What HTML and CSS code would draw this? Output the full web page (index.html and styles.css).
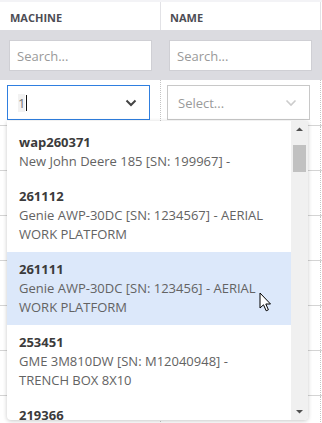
FILE: index.html
```html
<!DOCTYPE html>
<html>
<head>
<link rel="stylesheet" href="styles.css">
</head>
<body>
    <div id="page">
        <div class="topbar"></div>
        <div class="row head-row">
            <div class="cell col-machine">MACHINE</div>
            <div class="cell col-name">NAME</div>
        </div>
        <div class="row filter-row">
            <div class="cell col-machine"><input class="search" type="text" placeholder="Search..."></div>
            <div class="cell col-name"><input class="search" type="text" placeholder="Search..."></div>
        </div>
        <div class="row body-row select-row">
            <div class="cell col-machine">
                <div class="select focused">
                    <span class="typed">1</span><span class="caret"></span>
                    <svg class="chevron" width="12" height="8" viewBox="0 0 12 8"><path d="M1.5 1.5 L6 6 L10.5 1.5" fill="none" stroke="#444" stroke-width="2"/></svg>
                </div>
            </div>
            <div class="cell col-name">
                <div class="select">
                    <span class="placeholder">Select...</span>
                    <svg class="chevron" width="12" height="8" viewBox="0 0 12 8"><path d="M1.5 1.5 L6 6 L10.5 1.5" fill="none" stroke="#ccc" stroke-width="1.6"/></svg>
                </div>
            </div>
        </div>
        <div class="row body-row"><div class="cell col-machine"></div><div class="cell col-name"></div></div>
        <div class="row body-row"><div class="cell col-machine"></div><div class="cell col-name"></div></div>
        <div class="row body-row"><div class="cell col-machine"></div><div class="cell col-name"></div></div>
        <div class="row body-row"><div class="cell col-machine"></div><div class="cell col-name"></div></div>
        <div class="row body-row"><div class="cell col-machine"></div><div class="cell col-name"></div></div>
        <div class="row body-row"><div class="cell col-machine"></div><div class="cell col-name"></div></div>
        <div class="row body-row"><div class="cell col-machine"></div><div class="cell col-name"></div></div>

        <!-- open dropdown of the machine select -->
        <div id="dropdown">
            <div class="options">
                <div class="option">
                    <div class="opt-title">wap260371</div>
                    <div class="opt-desc">New John Deere 185 [SN: 199967] -</div>
                </div>
                <div class="option">
                    <div class="opt-title">261112</div>
                    <div class="opt-desc">Genie AWP-30DC [SN: 1234567] - AERIAL WORK PLATFORM</div>
                </div>
                <div class="option hover">
                    <div class="opt-title">261111</div>
                    <div class="opt-desc">Genie AWP-30DC [SN: 123456] - AERIAL WORK PLATFORM</div>
                </div>
                <div class="option">
                    <div class="opt-title">253451</div>
                    <div class="opt-desc">GME 3M810DW [SN: M12040948] - TRENCH BOX 8X10</div>
                </div>
                <div class="option">
                    <div class="opt-title">219366</div>
                </div>
            </div>
            <div class="scrollbar">
                <svg class="arrow" width="17" height="17" viewBox="0 0 17 17"><path d="M5 10 L8.5 6.5 L12 10 Z" fill="#505050"/></svg>
                <div class="thumb"></div>
                <div class="track-fill"></div>
                <svg class="arrow" width="17" height="17" viewBox="0 0 17 17"><path d="M5 7 L8.5 10.5 L12 7 Z" fill="#505050"/></svg>
            </div>
        </div>

        <svg id="pointer" width="14" height="21" viewBox="0 0 14 21">
            <path d="M1 1 L1 16 L4.5 12.8 L7.2 18.8 L9.4 17.8 L6.8 12 L11.5 12 Z" fill="#fff" stroke="#000" stroke-width="1" stroke-linejoin="round"/>
        </svg>
    </div>
</body>
</html>
```
FILE: styles.css
```css
body {
    margin: 0;
    font-family: "Open Sans", "Liberation Sans", sans-serif;
    font-size: 13px;
    color: #333;
    background: #fff;
}
#page {
    position: relative;
    width: 322px;
    height: 423px;
    overflow: hidden;
}
.topbar {
    height: 2px;
    background: #f3f3f6;
}
.row {
    display: flex;
}
.cell {
    box-sizing: border-box;
}
.col-machine {
    width: 161px;
}
.col-name {
    width: 160px;
}
.head-row {
    height: 28px;
}
.head-row .cell {
    display: flex;
    align-items: center;
    padding: 2px 0 0 10px;
    border-right: 1px solid #e2e2e6;
    font-size: 11px;
    font-weight: 700;
    color: #4d4d55;
}
.head-row .col-name {
    padding-left: 9px;
}
.filter-row {
    height: 50px;
    background: #dbdbe0;
}
.filter-row .cell {
    padding: 10px 0 0 9px;
}
.filter-row .col-name {
    padding-left: 8px;
}
.search {
    box-sizing: border-box;
    width: 143px;
    height: 31px;
    margin: 0;
    padding: 0 7px;
    border: 1px solid #cfcfd4;
    border-radius: 0;
    background: #fff;
    font-family: inherit;
    font-size: 13px;
    outline: none;
}
.search::placeholder {
    color: #9a9a9a;
}
.body-row {
    height: 45px;
    border-bottom: 1px solid #d4d4d4;
    box-sizing: border-box;
}
.select-row {
    height: 46px;
}
.body-row .cell {
    border-right: 1px dotted #c4c4c4;
}
.select-row .cell {
    padding: 5px 0 0 7px;
}
.select-row .col-name {
    padding-left: 6px;
}
.select {
    box-sizing: border-box;
    display: flex;
    align-items: center;
    width: 143px;
    height: 35px;
    padding: 0 12px 0 10px;
    border: 1px solid #c8c8c8;
    background: #fff;
}
.select.focused {
    border-color: #2f7fe0;
    padding-left: 10px;
}
.typed {
    color: #777;
    background: #f2f2f2;
}
.caret {
    width: 1px;
    height: 16px;
    margin-left: 1px;
    background: #111;
}
.placeholder {
    color: #9a9a9a;
}
.chevron {
    margin-left: auto;
}
#dropdown {
    position: absolute;
    left: 7px;
    top: 121px;
    width: 301px;
    height: 299px;
    display: flex;
    background: #fff;
    border-radius: 0 0 4px 4px;
    box-shadow: 0 1px 4px rgba(0, 0, 0, 0.22);
    overflow: hidden;
}
.options {
    flex: 1;
    padding-top: 4px;
    overflow: hidden;
}
.option {
    padding: 8px 24px 8px 12px;
    line-height: 19px;
}
.option.hover {
    background: #dce8fa;
}
.opt-title {
    font-weight: 700;
    color: #3b3b3b;
}
.opt-desc {
    color: #636363;
}
.scrollbar {
    width: 17px;
    display: flex;
    flex-direction: column;
    background: #f0f0f0;
}
.arrow {
    display: block;
}
.thumb {
    height: 27px;
    margin: 7px 2px 0 2px;
    background: #c1c1c1;
}
.track-fill {
    flex: 1;
}
#pointer {
    position: absolute;
    left: 259px;
    top: 292px;
}
```
